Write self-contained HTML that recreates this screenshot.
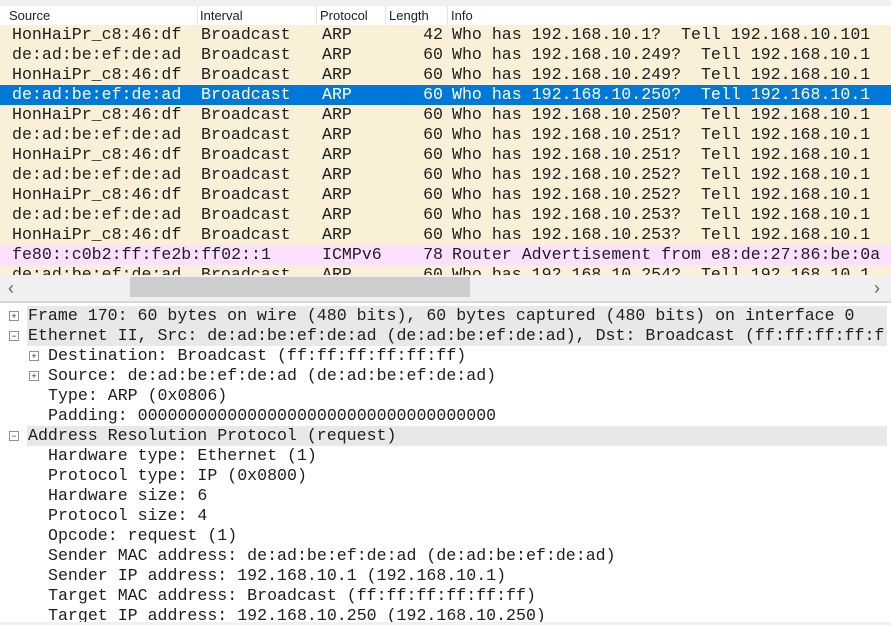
<!DOCTYPE html>
<html><head><style>
body{margin:0;width:891px;height:625px;overflow:hidden;background:#fff;font-family:"Liberation Mono",monospace;font-size:16.6px;color:#1e1e1e;position:relative}
.r{position:absolute;left:0;width:891px;height:20px;line-height:20px;white-space:pre;background:#faf0d7}
.r span{position:absolute;top:0}
.a{left:12px}.b{left:201px}.c{left:322px}.d{left:386px;width:57px;text-align:right}.e{left:452px}
.sel{background:#0078d7;color:#fff}
.pk{background:#fce0ff}
.hd{position:absolute;top:6px;left:0;width:891px;height:19px;background:#fff;font-family:"Liberation Sans",sans-serif;font-size:13px;line-height:19px;border-bottom:1px solid #e0e0e0}
.hd span{position:absolute;top:0;padding-left:4px;border-right:1px solid #e4e4e4;height:19px}
.t{position:absolute;left:0;width:891px;height:20px;line-height:20px;white-space:pre}
.g{background:#e8e8e8;left:27px;width:860px}
.ic{position:absolute;width:8px;height:8px;border:1px solid #909090;background:#fff;font:9px/8px "Liberation Sans";text-align:center;color:#333}
</style></head><body>
<div style="position:absolute;top:0;left:0;width:891px;height:6px;background:#f0f0f0"></div>
<div class="hd"><span style="left:5px;width:188px">Source</span><span style="left:196px;width:116px">Interval</span><span style="left:316px;width:65px">Protocol</span><span style="left:385px;width:58px">Length</span><span style="left:447px;width:440px;border:none">Info</span></div>
<div class="r" style="top:25px"><span class="a">HonHaiPr_c8:46:df</span><span class="b">Broadcast</span><span class="c">ARP</span><span class="d">42</span><span class="e">Who has 192.168.10.1?  Tell 192.168.10.101</span></div>
<div class="r" style="top:45px"><span class="a">de:ad:be:ef:de:ad</span><span class="b">Broadcast</span><span class="c">ARP</span><span class="d">60</span><span class="e">Who has 192.168.10.249?  Tell 192.168.10.1</span></div>
<div class="r" style="top:65px"><span class="a">HonHaiPr_c8:46:df</span><span class="b">Broadcast</span><span class="c">ARP</span><span class="d">60</span><span class="e">Who has 192.168.10.249?  Tell 192.168.10.1</span></div>
<div class="r sel" style="top:85px"><span class="a">de:ad:be:ef:de:ad</span><span class="b">Broadcast</span><span class="c">ARP</span><span class="d">60</span><span class="e">Who has 192.168.10.250?  Tell 192.168.10.1</span></div>
<div class="r" style="top:105px"><span class="a">HonHaiPr_c8:46:df</span><span class="b">Broadcast</span><span class="c">ARP</span><span class="d">60</span><span class="e">Who has 192.168.10.250?  Tell 192.168.10.1</span></div>
<div class="r" style="top:125px"><span class="a">de:ad:be:ef:de:ad</span><span class="b">Broadcast</span><span class="c">ARP</span><span class="d">60</span><span class="e">Who has 192.168.10.251?  Tell 192.168.10.1</span></div>
<div class="r" style="top:145px"><span class="a">HonHaiPr_c8:46:df</span><span class="b">Broadcast</span><span class="c">ARP</span><span class="d">60</span><span class="e">Who has 192.168.10.251?  Tell 192.168.10.1</span></div>
<div class="r" style="top:165px"><span class="a">de:ad:be:ef:de:ad</span><span class="b">Broadcast</span><span class="c">ARP</span><span class="d">60</span><span class="e">Who has 192.168.10.252?  Tell 192.168.10.1</span></div>
<div class="r" style="top:185px"><span class="a">HonHaiPr_c8:46:df</span><span class="b">Broadcast</span><span class="c">ARP</span><span class="d">60</span><span class="e">Who has 192.168.10.252?  Tell 192.168.10.1</span></div>
<div class="r" style="top:205px"><span class="a">de:ad:be:ef:de:ad</span><span class="b">Broadcast</span><span class="c">ARP</span><span class="d">60</span><span class="e">Who has 192.168.10.253?  Tell 192.168.10.1</span></div>
<div class="r" style="top:225px"><span class="a">HonHaiPr_c8:46:df</span><span class="b">Broadcast</span><span class="c">ARP</span><span class="d">60</span><span class="e">Who has 192.168.10.253?  Tell 192.168.10.1</span></div>
<div class="r pk" style="top:245px"><span class="a">fe80::c0b2:ff:fe2b:ff02::1</span><span class="c">ICMPv6</span><span class="d">78</span><span class="e">Router Advertisement from e8:de:27:86:be:0a</span></div>
<div class="r" style="top:265px;height:10px;overflow:hidden"><span class="a">de:ad:be:ef:de:ad</span><span class="b">Broadcast</span><span class="c">ARP</span><span class="d">60</span><span class="e">Who has 192.168.10.254?  Tell 192.168.10.1</span></div>
<div style="position:absolute;top:275px;left:0;width:891px;height:26px;background:#f0f0f0"></div>
<div style="position:absolute;top:277px;left:130px;width:340px;height:20px;background:#cdcdcd"></div>
<div style="position:absolute;top:278px;left:8px;font:18px/20px 'Liberation Sans';color:#606060">&#8249;</div>
<div style="position:absolute;top:278px;left:874px;font:18px/20px 'Liberation Sans';color:#606060">&#8250;</div>
<div style="position:absolute;top:301px;left:0;width:891px;height:2px;background:#d8d8d8"></div>
<div class="t g" style="top:306px"></div><div class="t" style="top:306px;left:28px">Frame 170: 60 bytes on wire (480 bits), 60 bytes captured (480 bits) on interface 0</div><div class="ic" style="left:9px;top:311px">+</div>
<div class="t g" style="top:326px"></div><div class="t" style="top:326px;left:28px">Ethernet II, Src: de:ad:be:ef:de:ad (de:ad:be:ef:de:ad), Dst: Broadcast (ff:ff:ff:ff:f</div><div class="ic" style="left:9px;top:331px">−</div>
<div class="t" style="top:346px;left:48px">Destination: Broadcast (ff:ff:ff:ff:ff:ff)</div><div class="ic" style="left:29px;top:351px">+</div>
<div class="t" style="top:366px;left:48px">Source: de:ad:be:ef:de:ad (de:ad:be:ef:de:ad)</div><div class="ic" style="left:29px;top:371px">+</div>
<div class="t" style="top:386px;left:48px">Type: ARP (0x0806)</div>
<div class="t" style="top:406px;left:48px">Padding: 000000000000000000000000000000000000</div>
<div class="t g" style="top:426px"></div><div class="t" style="top:426px;left:28px">Address Resolution Protocol (request)</div><div class="ic" style="left:9px;top:431px">−</div>
<div class="t" style="top:446px;left:48px">Hardware type: Ethernet (1)</div>
<div class="t" style="top:466px;left:48px">Protocol type: IP (0x0800)</div>
<div class="t" style="top:486px;left:48px">Hardware size: 6</div>
<div class="t" style="top:506px;left:48px">Protocol size: 4</div>
<div class="t" style="top:526px;left:48px">Opcode: request (1)</div>
<div class="t" style="top:546px;left:48px">Sender MAC address: de:ad:be:ef:de:ad (de:ad:be:ef:de:ad)</div>
<div class="t" style="top:566px;left:48px">Sender IP address: 192.168.10.1 (192.168.10.1)</div>
<div class="t" style="top:586px;left:48px">Target MAC address: Broadcast (ff:ff:ff:ff:ff:ff)</div>
<div class="t" style="top:606px;left:48px;height:16px;overflow:hidden">Target IP address: 192.168.10.250 (192.168.10.250)</div>
<div style="position:absolute;top:622px;left:0;width:891px;height:3px;background:#f0f0f0"></div>
</body></html>
